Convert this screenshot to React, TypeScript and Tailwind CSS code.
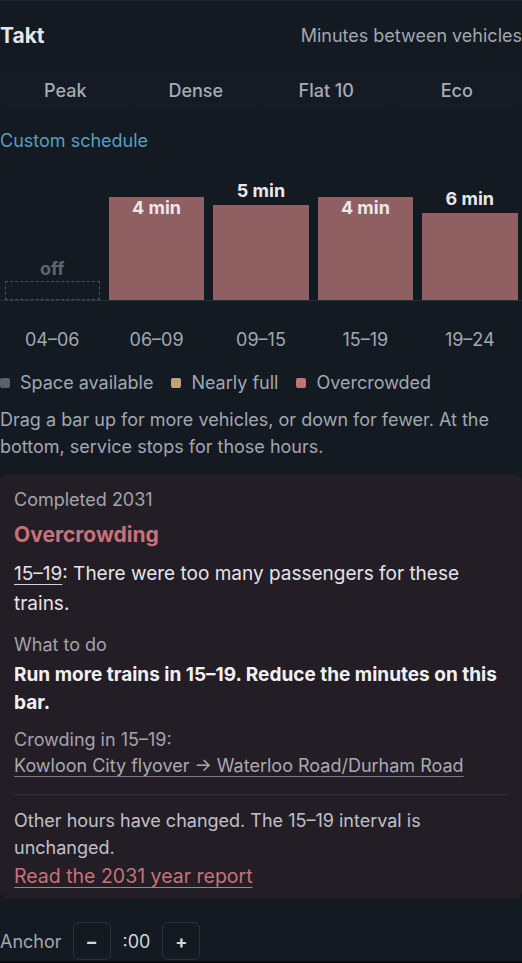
import React from "react";

const presets = ["Peak", "Dense", "Flat 10", "Eco"];

const bars = [
  { range: "04–06", minutes: 0 },
  { range: "06–09", minutes: 4 },
  { range: "09–15", minutes: 5 },
  { range: "15–19", minutes: 4 },
  { range: "19–24", minutes: 6 },
];

const TALL = 4;

const Bar = ({ minutes }: { minutes: number }) => {
  if (minutes === 0) {
    return (
      <div className="flex flex-col items-center">
        <span className="text-[18px] leading-[22px] font-bold text-[#5f6570] mb-[1px]">off</span>
        <div className="w-full h-[19px] border border-dashed border-[#4a505a]" />
      </div>
    );
  }
  const height = 135 - minutes * 8;
  if (minutes <= TALL) {
    return (
      <div className="w-full bg-[#8f5f62] flex justify-center" style={{ height }}>
        <span className="text-[18px] leading-[22px] font-bold text-[#e8e8ec]">{minutes} min</span>
      </div>
    );
  }
  return (
    <div className="flex flex-col items-center">
      <span className="text-[18px] leading-[22px] font-bold text-[#e8e8ec] mb-[3px]">{minutes} min</span>
      <div className="w-full bg-[#8f5f62]" style={{ height }} />
    </div>
  );
};

const App = () => {
  return (
    <div className="min-h-screen bg-[#0a0c10] font-['Inter','Liberation_Sans',sans-serif]">
      <div className="bg-[#141a22] border-t border-[#1f2630] h-[961px]">
        <div className="flex flex-row items-center justify-between pt-[21px]">
          <h2 className="text-[21px] leading-[28px] font-bold text-[#e6e7ea]">Takt</h2>
          <span className="text-[18px] leading-[24px] text-[#a2a7b0]">Minutes between vehicles</span>
        </div>

        <div className="grid grid-cols-4 mt-[20px]">
          {presets.map((p) => (
            <button
              key={p}
              className="h-[40px] text-[18px] font-medium text-[#a7abb3] bg-[#151b24] rounded-md"
            >
              {p}
            </button>
          ))}
        </div>

        <p className="mt-[19px] text-[18px] leading-[24px] text-[#5b9dbd]">Custom schedule</p>

        <div className="border-b border-[#2a3039]">
          <div className="grid grid-cols-5 h-[147px] items-end">
            {bars.map((b) => (
              <div key={b.range} className="px-[4.5px]">
                <Bar minutes={b.minutes} />
              </div>
            ))}
          </div>
        </div>

        <div className="grid grid-cols-5 mt-[27px]">
          {bars.map((b) => (
            <span key={b.range} className="text-center text-[18px] leading-[24px] text-[#a2a7b0]">
              {b.range}
            </span>
          ))}
        </div>

        <div className="flex flex-row items-center gap-[18px] mt-[19px] text-[18px] leading-[24px] text-[#a2a7b0]">
          <div className="flex items-center gap-[10px]">
            <span className="w-[10px] h-[10px] rounded-[2px] bg-[#5b6069]" />
            Space available
          </div>
          <div className="flex items-center gap-[10px]">
            <span className="w-[10px] h-[10px] rounded-[2px] bg-[#c4a077]" />
            Nearly full
          </div>
          <div className="flex items-center gap-[10px]">
            <span className="w-[10px] h-[10px] rounded-[2px] bg-[#c07474]" />
            Overcrowded
          </div>
        </div>

        <p className="mt-[11px] text-[18px] leading-[27px] text-[#a2a7b0]">
          Drag a bar up for more vehicles, or down for fewer. At the bottom, service stops for those hours.
        </p>

        <section className="mt-[14px] bg-[#231e26] rounded-lg px-[14px] pt-[14px] pb-[10px]">
          <p className="text-[18px] leading-[24px] text-[#a3a3ab]">Completed 2031</p>
          <h3 className="mt-[9px] text-[21px] leading-[28px] font-bold text-[#c8717a]">Overcrowding</h3>
          <p className="mt-[10px] text-[19px] leading-[30px] text-[#e4e4e8]">
            <span className="underline underline-offset-[4px] decoration-[#d4d4d8]">15–19</span>: There were too many
            passengers for these trains.
          </p>

          <p className="mt-[14px] text-[18px] leading-[24px] text-[#a3a3ab]">What to do</p>
          <p className="mt-[4px] text-[19px] leading-[28px] font-bold text-[#f1f1f4]">
            Run more trains in 15–19. Reduce the minutes on this bar.
          </p>

          <p className="mt-[11px] text-[18px] leading-[24px] text-[#a3a3ab]">Crowding in 15–19:</p>
          <p className="mt-[2px] text-[18px] leading-[24px] text-[#a9a9b2] underline underline-offset-[4px] decoration-[#7c7c86]">
            Kowloon City flyover → Waterloo Road/Durham Road
          </p>

          <div className="mt-[16px] border-t border-[#34303a]" />

          <p className="mt-[12px] text-[18px] leading-[27px] text-[#c0c0c8]">
            Other hours have changed. The 15–19 interval is unchanged.
          </p>
          <a className="block mt-[2px] text-[19.5px] leading-[26px] text-[#c8717a] underline underline-offset-[4px] decoration-[#c8717a]">
            Read the 2031 year report
          </a>
        </section>

        <div className="flex flex-row items-center mt-[23px] text-[18px] text-[#a2a7b0]">
          <span>Anchor</span>
          <button className="ml-[11px] w-[38px] h-[38px] border border-[#2a313b] rounded-md text-[#d4d6da] font-bold">
            −
          </button>
          <span className="mx-[12px] text-[#d4d6da]">:00</span>
          <button className="w-[38px] h-[38px] border border-[#2a313b] rounded-md text-[#d4d6da] font-bold">
            +
          </button>
        </div>
      </div>
    </div>
  );
};

export default App;
